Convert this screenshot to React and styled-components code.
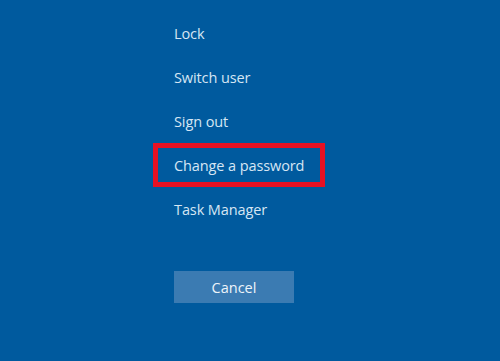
import React from "react";
import styled, { createGlobalStyle } from "styled-components";

const Global = createGlobalStyle`
  html, body { margin: 0; padding: 0; background: #005a9e; }
  body { font-family: "Open Sans", "Noto Sans", sans-serif; }
`;

const Screen = styled.div`
  width: 500px;
  height: 361px;
  background: #005a9e;
  box-sizing: border-box;
  padding: 11px 0 0 153px;
  display: flex;
  flex-direction: column;
  align-items: flex-start;
`;

const Menu = styled.ul`
  list-style: none;
  margin: 0;
  padding: 0;
  display: flex;
  flex-direction: column;
`;

const Item = styled.li`
  box-sizing: border-box;
  width: 172px;
  height: 44px;
  padding-left: 16px;
  border: 5px solid ${(p) => (p.$selected ? "#e81123" : "transparent")};
  display: flex;
  align-items: center;
  color: #d6e6f4;
  font-size: 14.5px;
  letter-spacing: -0.1px;
  white-space: nowrap;
`;

const CancelButton = styled.button`
  margin: 40px 0 0 21px;
  width: 120px;
  height: 32px;
  border: none;
  background: #3b7bb2;
  color: #eef4fa;
  font-family: inherit;
  font-size: 14.5px;
  padding: 0;
`;

const items = ["Lock", "Switch user", "Sign out", "Change a password", "Task Manager"];

export default function App() {
  return (
    <>
      <Global />
      <Screen>
        <Menu>
          {items.map((t) => (
            <Item key={t} $selected={t === "Change a password"}>
              {t}
            </Item>
          ))}
        </Menu>
        <CancelButton>Cancel</CancelButton>
      </Screen>
    </>
  );
}
